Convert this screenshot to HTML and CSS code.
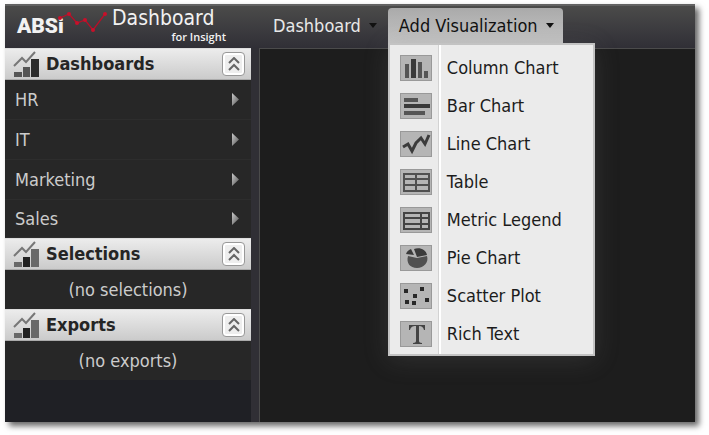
FILE: index.html
```html
<!DOCTYPE html>
<html lang="en">
<head>
<meta charset="utf-8">
<title>ABSi Dashboard for Insight</title>
<link rel="stylesheet" href="styles.css">
</head>
<body>
<svg class="defs" aria-hidden="true">
  <symbol id="chart" viewBox="0 0 26 28">
    <path d="M1 16 9 8l4 4 9-10" fill="none" stroke="#777" stroke-width="2"/>
    <path d="M1 22h8v5H1zM18 9h8v18h-8z" fill="#696969"/>
    <path d="M10 17h7v10h-7z" fill="#222"/>
  </symbol>
  <symbol id="chart-dark" viewBox="0 0 26 28">
    <path d="M1 16 9 8l4 4 9-10" fill="none" stroke="#777" stroke-width="2"/>
    <path d="M1 22h8v5H1zM10 17h7v10h-7z" fill="#555"/>
    <path d="M18 9h8v18h-8z" fill="#2b2b2b"/>
  </symbol>
  <symbol id="chevrons" viewBox="0 0 12 14">
    <path d="m1 6 5-5 5 5M1 13l5-5 5 5" fill="none" stroke="#666" stroke-width="2"/>
  </symbol>
  <linearGradient id="shade" x2="1" y2="1"><stop stop-color="#ccc"/><stop offset="1" stop-color="#555"/></linearGradient>
  <symbol id="arrow" viewBox="0 0 9 15"><path d="M1 1v13l7-6.500z" fill="url(#shade)"/></symbol>
</svg>
<div class="app">
  <header class="topbar">
    <div class="brand">
      <span class="mark">ABSi</span>
      <svg class="spark" viewBox="0 0 52 24" aria-hidden="true">
        <path d="M3 8 12 4l8 9 8-3 8 10L48 4" fill="none" stroke="#b80f28" stroke-width="1.300"/>
        <g fill="#c8102a"><circle cx="3" cy="8" r="2"/><circle cx="12" cy="4" r="2"/><circle cx="20" cy="13" r="2"/><circle cx="28" cy="10" r="2"/><circle cx="36" cy="20" r="2"/><circle cx="48" cy="4" r="2"/></g>
      </svg>
      <div class="product"><span class="product-name">Dashboard</span><span class="product-sub">for Insight</span></div>
    </div>
    <nav class="menubar">
      <button class="menu-button">Dashboard<span class="caret"></span></button>
      <div class="menu-wrap">
        <button class="menu-button open" aria-expanded="true">Add Visualization<span class="caret"></span></button>
        <div class="menu">
          <button class="item"><svg class="tile" viewBox="0 0 32 26"><path d="M5 9h4v14H5zM18 7h4v16h-4zM24 16h4v7h-4z" fill="#555"/><path d="M11 4h5v19h-5z" fill="#393939"/></svg><span>Column Chart</span></button>
          <button class="item"><svg class="tile" viewBox="0 0 32 26"><path d="M4 5h14v4H4zM4 18h21v4H4z" fill="#555"/><path d="M4 11h26v4H4z" fill="#393939"/></svg><span>Bar Chart</span></button>
          <button class="item"><svg class="tile" viewBox="0 0 32 26"><path d="m3 16 5-3 4 7 4-8 5-5 4 6 4-9" fill="none" stroke="#3b3b3b" stroke-width="3"/></svg><span>Line Chart</span></button>
          <button class="item"><svg class="tile" viewBox="0 0 32 26"><path d="M4 5h25v17H4zM4 10h25M4 16h25M16 5v17" fill="none" stroke="#505050" stroke-width="2"/></svg><span>Table</span></button>
          <button class="item"><svg class="tile" viewBox="0 0 32 26"><path d="M4 6h25v16H4zM4 11h25M4 17h25M21 6v16" fill="none" stroke="#444" stroke-width="2"/></svg><span>Metric Legend</span></button>
          <button class="item"><svg class="tile" viewBox="0 0 32 26"><path d="M17 13 8 11C6 18 10 23 17 23s12-6 10-12z" fill="#505050"/><path d="M17 12 14 4c5-2 12 0 13 6zM6 9c1-3 3-4 5-5l3 6z" fill="#3b3b3b"/></svg><span>Pie Chart</span></button>
          <button class="item"><svg class="tile" viewBox="0 0 32 26"><path d="M4 6h4v4H4zM20 4h4v4h-4zM13 11h4v4h-4zM5 17h4v4H5zM12 18h4v4h-4zM25 15h4v4h-4z" fill="#282828"/></svg><span>Scatter Plot</span></button>
          <button class="item"><svg class="tile" viewBox="0 0 32 26"><path d="M9 4h16v5h-1c-1-3-2-4-5-4v15c0 1 1 2 3 2v1h-9v-1c2 0 3-1 3-2V5c-4 0-5 1-6 4H9z" fill="#444"/></svg><span>Rich Text</span></button>
        </div>
      </div>
    </nav>
  </header>
  <div class="body">
    <aside class="sidebar">
      <section>
        <div class="heading"><svg class="chart"><use href="#chart-dark"/></svg><h2>Dashboards</h2><button class="collapse" aria-label="Collapse Dashboards"><svg><use href="#chevrons"/></svg></button></div>
        <a class="row" href="#hr">HR<svg class="arrow"><use href="#arrow"/></svg></a>
        <a class="row" href="#it">IT<svg class="arrow"><use href="#arrow"/></svg></a>
        <a class="row" href="#marketing">Marketing<svg class="arrow"><use href="#arrow"/></svg></a>
        <a class="row" href="#sales">Sales<svg class="arrow"><use href="#arrow"/></svg></a>
      </section>
      <section>
        <div class="heading"><svg class="chart"><use href="#chart"/></svg><h2>Selections</h2><button class="collapse" aria-label="Collapse Selections"><svg><use href="#chevrons"/></svg></button></div>
        <p class="empty">(no selections)</p>
      </section>
      <section>
        <div class="heading"><svg class="chart"><use href="#chart"/></svg><h2>Exports</h2><button class="collapse" aria-label="Collapse Exports"><svg><use href="#chevrons"/></svg></button></div>
        <p class="empty">(no exports)</p>
      </section>
    </aside>
    <main class="canvas"></main>
  </div>
</div>
</body>
</html>
```
FILE: styles.css
```css
* { box-sizing: border-box; }
body {
  margin: 0;
  min-height: 100vh;
  padding: 4px 14px 13px 5px;
  display: flex;
  background: #fff;
  font: 18px/24px "DejaVu Sans Condensed", "DejaVu Sans", sans-serif;
}
button { font: inherit; margin: 0; border: 0; }
.defs { position: absolute; width: 0; height: 0; }
.app {
  flex: 1;
  display: flex;
  flex-direction: column;
  background: #302f35;
  box-shadow: 4px 4px 6px rgba(0, 0, 0, .6);
}
.topbar {
  display: flex;
  height: 44px;
  border-top: 2px solid #626262;
  background: linear-gradient(#4b4b4a, #302f36);
}
.brand {
  width: 257px;
  display: flex;
  padding-left: 12px;
  color: #f2f2f2;
}
.mark {
  width: 44px;
  font: 900 21px/40px Roboto, "Liberation Sans", sans-serif;
}
.spark { width: 52px; height: 24px; margin: 4px 0 0 -4px; }
.product {
  display: flex;
  flex-direction: column;
  width: 114px;
  margin-left: 3px;
}
.product-name { font: 400 21px/24px "DejaVu Sans Condensed", "DejaVu Sans", sans-serif; }
.product-sub { font: 600 11px/14px "Open Sans", sans-serif; align-self: flex-end; }
.menubar { display: flex; gap: 2px; padding-top: 2px; }
.menu-wrap { position: relative; }
.menu-button {
  display: flex;
  align-items: center;
  gap: 8px;
  height: 35px;
  padding: 0 9px 0 11px;
  border-radius: 4px 4px 0 0;
  background: none;
  color: #e8e8e8;
  white-space: nowrap;
}
.menu-button.open {
  background: linear-gradient(#aaa, #c4c4c4);
  color: #111;
}
.caret {
  border: solid transparent;
  border-width: 5px 4px 0;
  border-top-color: #111;
}
.menu {
  position: absolute;
  z-index: 1;
  top: 35px;
  left: 0;
  width: 207px;
  padding: 4px 0 1px;
  border: 2px solid #c3c3c3;
  background: linear-gradient(90deg, transparent 48px, #d2d2d2 48px 49px, #fff 49px 51px, transparent 51px) #ebebeb;
  box-shadow: 0 4px 24px rgba(130, 130, 130, .2);
}
.item {
  display: flex;
  align-items: center;
  gap: 15px;
  width: 100%;
  height: 38px;
  padding: 0 10px;
  background: none;
  color: #1c1c1c;
  text-align: left;
}
.tile {
  width: 32px;
  height: 26px;
  background: #b5b5b5;
  outline: 1px solid #999;
  outline-offset: -1px;
}
.body { flex: 1; display: flex; gap: 8px; }
.sidebar { width: 246px; background: #1f2025; }
.heading {
  display: flex;
  align-items: center;
  height: 32px;
  padding: 0 6px 0 8px;
  border: solid #dedede;
  border-width: 1px 0;
  border-bottom-color: #aaa;
  background: linear-gradient(#ececec, #cbcbcb);
}
.chart { width: 26px; height: 28px; }
h2 {
  flex: 1;
  margin: 0 0 0 7px;
  color: #252525;
  font-size: 18px;
  font-weight: bold;
}
.collapse {
  display: flex;
  align-items: center;
  justify-content: center;
  width: 23px;
  height: 24px;
  padding: 0;
  border: 1px solid #999;
  border-radius: 4px;
  background: #eee;
  box-shadow: inset 0 0 0 2px #fff;
}
.collapse svg { width: 12px; height: 14px; }
.row {
  display: flex;
  align-items: center;
  justify-content: space-between;
  height: 40px;
  padding: 0 11px 0 10px;
  border-bottom: 1px solid #2d2d2d;
  background: #272727;
  color: #ccc;
  text-decoration: none;
}
.row:last-child { height: 38px; }
.empty {
  margin: 0;
  padding: 8px 0 7px;
  background: #272727;
  color: #ccc;
  text-align: center;
}
.arrow { width: 9px; height: 15px; }
.canvas {
  flex: 1;
  border: solid #4b4b4b;
  border-width: 1px 0 0 1px;
  background: #1d1d1d;
}
```
